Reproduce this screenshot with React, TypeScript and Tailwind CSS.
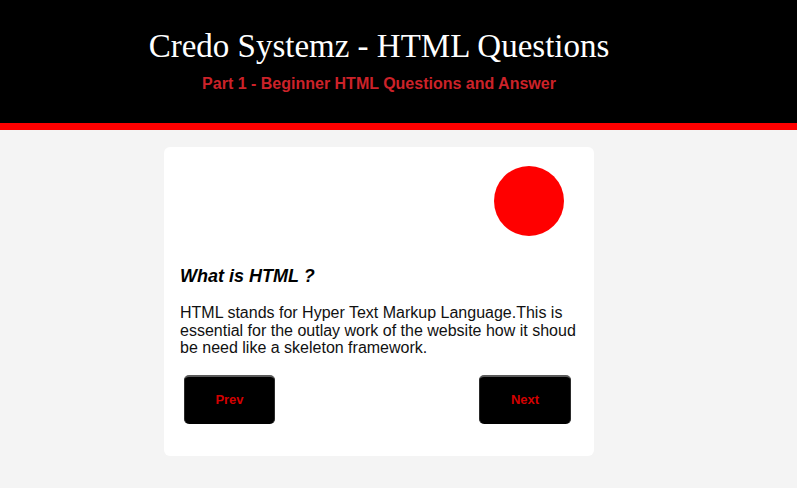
import React from 'react';

const App: React.FC = () => {
  return (
    <div className="min-h-[488px] w-full bg-[#f4f4f4] font-['Liberation_Sans',Arial,sans-serif]">
      <header className="h-[130px] bg-black border-b-[7px] border-[#ff0000] pr-[39px] flex flex-col items-center">
        <h1 className="mt-[27px] text-[33px] leading-[38px] text-white font-['Liberation_Serif','Times_New_Roman',serif]">
          Credo Systemz - HTML Questions
        </h1>
        <h2 className="mt-[9px] text-[16px] leading-[20px] font-bold text-[#cc2229]">
          Part 1 - Beginner HTML Questions and Answer
        </h2>
      </header>

      <main className="pr-[39px] pt-[17px] flex justify-center">
        <div className="w-[430px] h-[309px] bg-white rounded-md px-4 pt-[19px]">
          <div className="flex justify-end pr-[14px]">
            <div className="w-[70px] h-[70px] rounded-full bg-[#ff0000]" />
          </div>
          <h3 className="mt-[29px] text-[18px] leading-[22px] font-bold italic text-black">
            What is HTML ?
          </h3>
          <p className="mt-[17px] text-[16px] leading-[17.5px] text-[#111]">
            HTML stands for Hyper Text Markup Language.This is essential for the outlay work of the website how it shoud be need like a skeleton framework.
          </p>
          <div className="mt-[18px] flex justify-between pl-1 pr-[7px]">
            <button className="w-[91px] h-[49px] bg-black rounded-[5px] border-t-2 border-x border-t-[#5a5a5a] border-x-[#2a2a2a] text-[13px] font-bold text-[#d40000]">
              Prev
            </button>
            <button className="w-[92px] h-[49px] bg-black rounded-[5px] border-t-2 border-x border-t-[#5a5a5a] border-x-[#2a2a2a] text-[13px] font-bold text-[#d40000]">
              Next
            </button>
          </div>
        </div>
      </main>
    </div>
  );
};

export default App;
